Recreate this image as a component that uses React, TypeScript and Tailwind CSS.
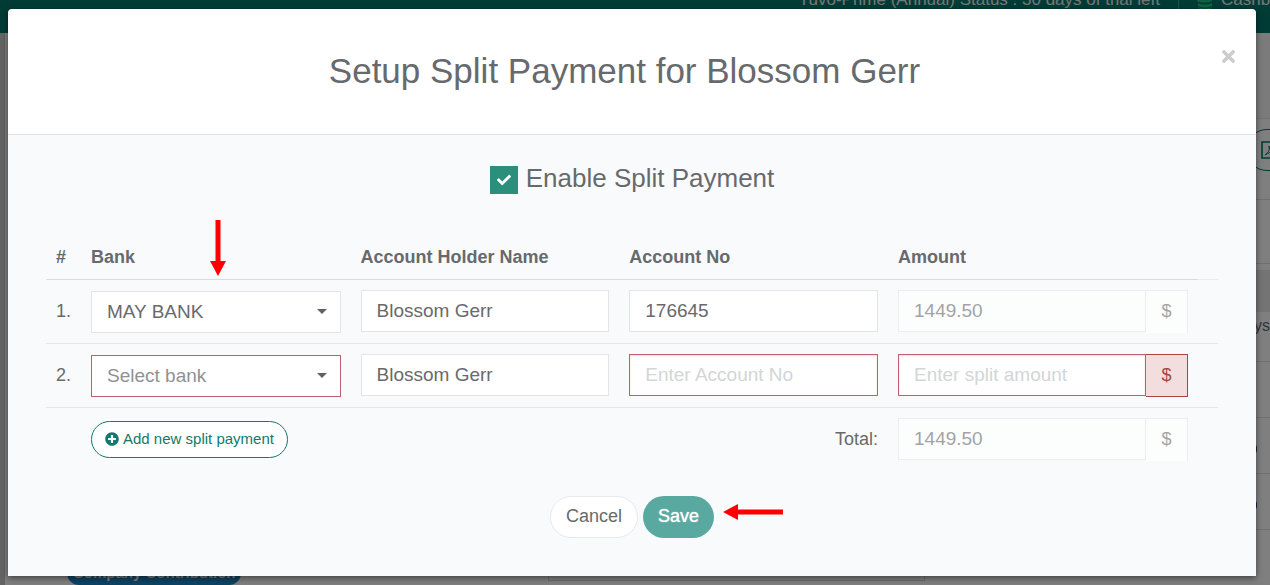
import { useState } from 'react';
import { FaCheck, FaPlusCircle, FaTimes } from 'react-icons/fa';

const inputBase = 'block w-full h-[42px] px-[15px] bg-white border text-[19px] rounded-none outline-none';
const inputNormal = 'border-[#e2e5e7] text-[#676a6c]';
const inputError = 'border-[#c0606c] text-[#676a6c] shadow-[inset_0_1px_2px_rgba(237,85,101,0.25)] placeholder:text-[#d3d5d7]';

function BankSelect({ label, value, error }: { label: string; value: string; error?: boolean }) {
    return (
        <div className="relative">
            <select
                aria-label={label}
                defaultValue={value}
                className={`appearance-none ${inputBase} ${error ? 'border-[#c0606c] text-[#8f9193]' : inputNormal}`}
            >
                <option value="">Select bank</option>
                <option value="may">MAY BANK</option>
            </select>
            <svg viewBox="0 0 10 5" className="absolute right-3.5 top-[18px] w-2.5 h-[5px] pointer-events-none" fill="#5f6264">
                <path d="M0 0h10L5 5z" />
            </svg>
        </div>
    );
}

function AmountInput({ label, value, error }: { label: string; value?: string; error?: boolean }) {
    return (
        <div className={`flex items-start ${error ? '' : 'opacity-60'}`}>
            <input
                aria-label={label}
                type="text"
                defaultValue={value}
                disabled={!error}
                placeholder="Enter split amount"
                className={`${inputBase} flex-1 min-w-0 ${error ? inputError : inputNormal}`}
            />
            <span
                className={`w-[42px] h-[43px] pb-0.5 flex items-center justify-center text-lg ${error
                    ? 'bg-[#f2dede] border border-l-0 border-[#a94442] text-[#a94442]'
                    : 'bg-white border-t border-r border-[#e2e5e7] text-[#676a6c]'}`}
            >
                $
            </span>
        </div>
    );
}

function PageBehind() {
    return (
        <div className="absolute inset-0 flex flex-col bg-white" aria-hidden="true">
            <div className="h-[33px] shrink-0 bg-[#00766c] flex items-start justify-end overflow-hidden text-[17px] text-[#e8eeee] whitespace-nowrap">
                <span className="-mt-2.5 leading-5 pr-[18px]">Tuvo-Prime (Annual) Status : 30 days of trial left</span>
                <span className="w-px h-full bg-[#4b9d96]" />
                <span className="-mt-2.5 leading-5 w-[91px] pl-[18px] flex items-center gap-2 overflow-hidden">
                    <svg viewBox="0 0 16 20" className="w-4 h-5 shrink-0" fill="#1fc285">
                        <path d="M1 3h14v3c-3 2-11 2-14 0zM0 8c4 2 11 2 15 0v3c-4 2-11 2-15 0zM1 13c4 2 10 2 14 0v3c-4 2-10 2-14 0zM1 17c4 2 10 2 14 0-1 4-13 4-14 0z" />
                    </svg>
                    Cashbook
                </span>
            </div>
            <div className="flex-1 flex min-h-0">
                <div className="w-[5px] bg-[#c8c8c8]" />
                <div className="flex-1 flex items-end pl-[62px]">
                    <span className="h-6 px-1.5 rounded-xl bg-[#1c84c6] text-white font-bold text-[15px] leading-6">Company Contribution</span>
                    <div className="ml-[307px] mb-1 w-[377px] h-10 border border-[#dddddd]" />
                </div>
                <div className="w-[30px] overflow-hidden text-base text-[#676a6c]">
                    <div className="h-[86px] bg-[#f6f6f6] border-b border-[#e4e4e4]" />
                    <div className="h-[81px] pt-2.5 pl-1.5 border-b border-[#dedede]">
                        <div className="w-20 h-[42px] rounded-full border border-[#00766c] pl-3.5 flex items-center">
                            <svg viewBox="0 0 18 18" className="w-[18px] h-[18px] shrink-0" fill="none" stroke="#00766c" strokeWidth="1.6">
                                <path d="M1 1h10l6 5v11H1z" />
                                <path d="M4 14c4-3 5-6 4-9 0 4 3 6 7 6-4-.5-8 1-11 3z" strokeWidth="1" />
                            </svg>
                        </div>
                    </div>
                    <div className="h-16 border-b border-[#dedede]" />
                    <div className="h-12 border-t-[6px] border-white bg-[#e9e9e9]" />
                    <div className="h-[50px] pt-0.5 pl-3.5 border-b border-[#dedede]">ys.</div>
                    <div className="h-14 border-b border-[#dedede]" />
                    <div className="h-14 pt-[26px] pl-2.5 border-b border-[#dedede]">
                        <div className="w-[7px] h-2.5 rounded-r bg-[#23527c]" />
                    </div>
                    <div className="h-14 pt-[26px] pl-2.5 border-b border-[#dedede]">
                        <div className="w-[7px] h-2.5 rounded-r bg-[#23527c]" />
                    </div>
                </div>
            </div>
        </div>
    );
}

export default function App() {
    const [enabled, setEnabled] = useState(true);
    const th = 'px-2.5 pt-2.5 pb-2.5 leading-6 text-left font-bold border-b border-[#d9dbdd]';
    const td = 'px-2.5 py-2.5 align-top border-b border-[#e5e7e9]';
    const tdBank = 'px-2.5 py-2.5 align-bottom border-b border-[#e5e7e9]';

    return (
        <div className="relative min-h-screen overflow-hidden text-[#676a6c] font-['Liberation_Sans',Arial,sans-serif]">
            <PageBehind />
            <div className="absolute inset-0 bg-black/50" />

            <div className="relative pt-[9px] pl-2 pr-3.5 pb-[9px]">
                <div role="dialog" aria-labelledby="split-title" className="rounded-t bg-white shadow-[0_2px_6px_rgba(0,0,0,0.5)]">
                    <div className="h-[126px] px-5 flex items-start border-b border-[#dfe3e6]">
                        <h1 id="split-title" className="flex-1 pt-10 text-center text-[35px] leading-[44px]">
                            Setup Split Payment for Blossom Gerr
                        </h1>
                        <button type="button" aria-label="Close" className="mt-[38px] w-[15px] flex justify-center text-[#cccccc]">
                            <FaTimes className="w-[15px] h-[19px] shrink-0" />
                        </button>
                    </div>

                    <div className="bg-[#f9fafc] px-[38px] pt-[31px] pb-[38px]">
                        <label className="h-7 flex items-center justify-center gap-2">
                            <span className="relative w-7 h-7">
                                <input
                                    type="checkbox"
                                    checked={enabled}
                                    onChange={(e) => setEnabled(e.target.checked)}
                                    className="block appearance-none w-7 h-7 bg-white border border-[#2b8f7b] checked:bg-[#2b8f7b]"
                                />
                                {enabled && <FaCheck className="absolute inset-[7px] w-3.5 h-3.5 text-white pointer-events-none" />}
                            </span>
                            <span className="text-[26px] leading-6 pb-1">Enable Split Payment</span>
                        </label>

                        <table className="mt-[41px] w-full table-fixed border-separate border-spacing-0 text-lg">
                            <colgroup>
                                <col className="w-[35px]" />
                                <col className="w-[23%]" />
                                <col />
                                <col />
                                <col className="w-[310px]" />
                                <col className="w-5" />
                            </colgroup>
                            <thead>
                                <tr>
                                    <th className={th}>#</th>
                                    <th className={`${th} relative`}>
                                        Bank
                                        <svg viewBox="0 0 16 56" className="absolute left-[129px] bottom-[3px] w-4 h-14" fill="#ff0000">
                                            <path d="M5.500 0h5v41H16L8 56 0 41h5.500z" />
                                        </svg>
                                    </th>
                                    <th className={th}>Account Holder Name</th>
                                    <th className={th}>Account No</th>
                                    <th className={th}>Amount</th>
                                    <td className="border-b border-[#e9ebed]" />
                                </tr>
                            </thead>
                            <tbody>
                                <tr>
                                    <td className={`${td} leading-[42px]`}>1.</td>
                                    <td className={tdBank}>
                                        <BankSelect label="Bank 1" value="may" />
                                    </td>
                                    <td className={td}>
                                        <input aria-label="Account holder name 1" type="text" defaultValue="Blossom Gerr" className={`${inputBase} ${inputNormal}`} />
                                    </td>
                                    <td className={td}>
                                        <input aria-label="Account no 1" type="text" defaultValue="176645" className={`${inputBase} ${inputNormal}`} />
                                    </td>
                                    <td className={td}>
                                        <AmountInput label="Amount 1" value="1449.50" />
                                    </td>
                                    <td className={td} />
                                </tr>
                                <tr>
                                    <td className={`${td} leading-[42px]`}>2.</td>
                                    <td className={tdBank}>
                                        <BankSelect label="Bank 2" value="" error />
                                    </td>
                                    <td className={td}>
                                        <input aria-label="Account holder name 2" type="text" defaultValue="Blossom Gerr" className={`${inputBase} ${inputNormal}`} />
                                    </td>
                                    <td className={td}>
                                        <input aria-label="Account no 2" type="text" placeholder="Enter Account No" className={`${inputBase} ${inputError}`} />
                                    </td>
                                    <td className={td}>
                                        <AmountInput label="Amount 2" error />
                                    </td>
                                    <td className={td} />
                                </tr>
                                <tr>
                                    <td />
                                    <td className="px-2.5 align-middle">
                                        <button
                                            type="button"
                                            className="h-[37px] px-[13px] pb-0.5 flex items-center gap-1 rounded-full border border-[#13796c] bg-white text-[#13796c] text-[15px] whitespace-nowrap"
                                        >
                                            <FaPlusCircle className="w-3.5 h-3.5" />
                                            Add new split payment
                                        </button>
                                    </td>
                                    <td />
                                    <td className="px-2.5 py-2.5 text-right align-top leading-[42px]">Total:</td>
                                    <td className="px-2.5 py-2.5">
                                        <AmountInput label="Total" value="1449.50" />
                                    </td>
                                    <td />
                                </tr>
                            </tbody>
                        </table>

                        <div className="mt-[25px] flex justify-center gap-[5px] text-lg">
                            <button type="button" className="h-[42px] px-[15px] pb-0.5 rounded-full bg-white border border-[#e7eaec]">
                                Cancel
                            </button>
                            <div className="relative">
                                <button type="button" className="h-[42px] px-[15px] pb-0.5 rounded-full bg-[#5aa9a0] text-white [text-shadow:0_0_1px_#fff]">
                                    Save
                                </button>
                                <svg viewBox="0 0 60 16" className="absolute left-full top-2 ml-[9px] w-[60px] h-4" fill="#ff0000">
                                    <path d="M0 8 15 0v5.500h45v5H15V16z" />
                                </svg>
                            </div>
                        </div>
                    </div>
                </div>
            </div>
        </div>
    );
}
